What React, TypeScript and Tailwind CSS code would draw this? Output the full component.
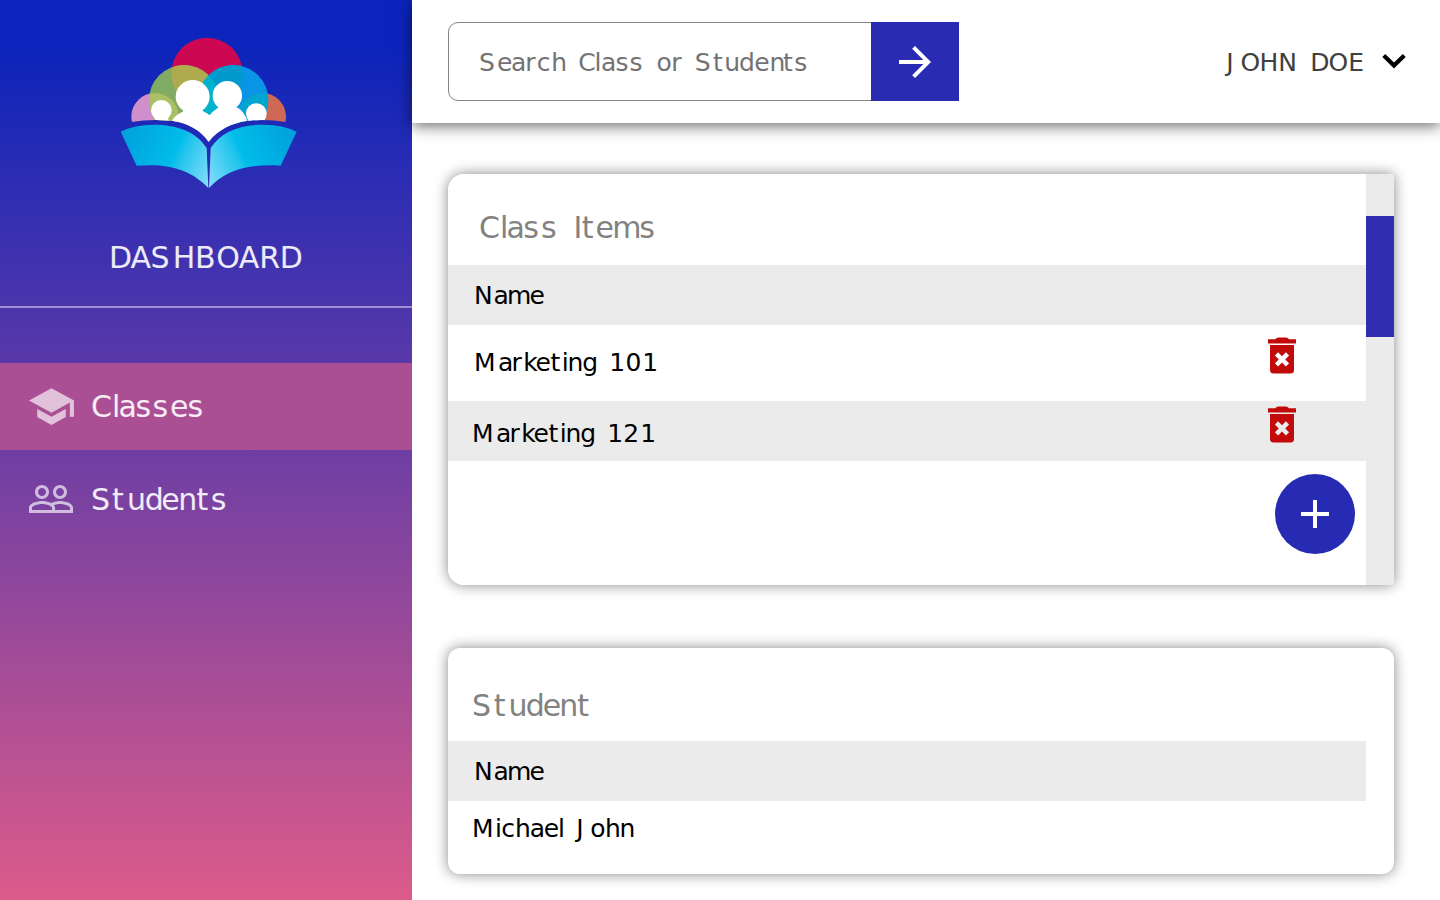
import type { ReactNode } from "react";
import { MdAdd, MdArrowForward, MdPeopleOutline, MdSchool } from "react-icons/md";

/* Text set with its own advance for every character; `stops` holds the left edge of each one. */
function Spaced({ text, stops, className = "" }: { text: string; stops: number[]; className?: string }) {
  return (
    <span className={`flex leading-none whitespace-pre ${className}`}>
      {text.split("").map((ch, i) => (
        <span
          key={i}
          className="block shrink-0"
          style={i + 1 < stops.length ? { width: stops[i + 1] - stops[i] } : undefined}
        >
          {ch}
        </span>
      ))}
    </span>
  );
}

const T = {
  dashboard: [108, 130.6, 150.6, 172.8, 195, 216.3, 238.8, 259.4, 279.8],
  classes: [91, 112, 118.6, 135.6, 152.6, 170, 187.4],
  students: [91, 112.1, 127.1, 144.7, 161.3, 178.3, 196.5, 210.7],
  search: [
    479, 497, 511, 525.2, 536.8, 551.2, 566, 578.4, 594.6, 601, 615.6, 629.6, 644, 656.5, 671.4, 680, 694.8,
    713, 724.4, 739.2, 754.3, 769.6, 783.2, 794.4,
  ],
  user: [1227, 1241.2, 1260.2, 1279, 1300, 1311, 1329.2, 1349],
  classItems: [479, 500, 506.6, 523.2, 541, 558, 573.6, 581.8, 595.6, 612.4, 639.4],
  name: [474, 493.4, 507, 529.4],
  m101: [474, 498, 511.4, 523.2, 535.4, 550.6, 561.8, 567.6, 582.4, 598, 609.2, 625.6, 642.4],
  m121: [472, 496, 509.4, 521.2, 533.4, 548.6, 559.8, 565.6, 580.4, 596, 607.4, 623.4, 640.4],
  student: [472, 493.8, 508.5, 525.7, 542.7, 559.4, 577.4],
  michael: [472, 495, 501.3, 515, 529.8, 543.8, 558, 565, 576.4, 590.4, 605, 619.6],
};

function Logo() {
  return (
    <svg className="ml-[100px] h-[180px] w-[220px] shrink-0" viewBox="0 0 660 540">
      <defs>
        <linearGradient id="pageL" x1="62" y1="350" x2="330" y2="470" gradientUnits="userSpaceOnUse">
          <stop offset="0" stopColor="#00a0dc" />
          <stop offset="0.58" stopColor="#00bdea" />
          <stop offset="0.64" stopColor="#1cc3ec" />
          <stop offset="1" stopColor="#7fdcf8" />
        </linearGradient>
        <linearGradient id="pageR" x1="590" y1="350" x2="322" y2="470" gradientUnits="userSpaceOnUse">
          <stop offset="0" stopColor="#00a0dc" />
          <stop offset="0.58" stopColor="#00bdea" />
          <stop offset="0.64" stopColor="#1cc3ec" />
          <stop offset="1" stopColor="#7fdcf8" />
        </linearGradient>
        <clipPath id="above">
          <path d="M0 0H660V306H558Q500 296 443 302C395 309 352 330 326 366C302 330 262 308 215 302Q150 296 94 306H0Z" />
        </clipPath>
        <clipPath id="green"><circle cx="252" cy="240" r="105" /></clipPath>
        <clipPath id="blue"><circle cx="400" cy="240" r="105" /></clipPath>
      </defs>
      <g clipPath="url(#above)">
        <circle cx="321" cy="160" r="107" fill="#cc0852" />
        <circle cx="165" cy="290" r="71" fill="#cf8fcb" />
        <circle cx="487" cy="290" r="71" fill="#cf6854" />
        <circle cx="252" cy="240" r="105" fill="#81aa62" />
        <circle cx="400" cy="240" r="105" fill="#0a94e6" />
        <g clipPath="url(#green)">
          <circle cx="321" cy="160" r="107" fill="#aeaa4e" />
          <circle cx="165" cy="290" r="71" fill="#a9c064" />
        </g>
        <g clipPath="url(#blue)">
          <circle cx="321" cy="160" r="107" fill="#0299cd" />
          <circle cx="487" cy="290" r="71" fill="#00a6cf" />
          <circle cx="252" cy="240" r="105" fill="#00b2cd" />
        </g>
        <g fill="#fff">
          <circle cx="184" cy="271" r="31" />
          <circle cx="469" cy="281" r="31" />
          <path d="M160 310Q163 296 172 294H200Q207 296 209 310ZM436 310Q444 300 450 297H490Q497 300 500 310Z" />
          <ellipse cx="278" cy="230" rx="51" ry="50" />
          <circle cx="382" cy="227" r="44" />
          <path d="M213 306Q227 283 248 275Q253 270 247 262H308Q302 271 312 275Q322 279 329 286Q337 274 350 266Q360 262 356 252H408Q404 261 414 264Q434 275 443 306L326 372Z" />
        </g>
      </g>
      <path fill="url(#pageL)" d="M62 335Q103 314 160 314C235 314 290 337 320 384L325 504C276 452 212 429 110 437Z" />
      <path fill="url(#pageR)" d="M590 335Q549 314 492 314C417 314 362 337 332 384L327 504C376 452 440 431 542 437Z" />
    </svg>
  );
}

function TrashIcon({ className = "" }: { className?: string }) {
  return (
    <svg className={`h-[37px] w-7 ${className}`} viewBox="0 0 28 37" fill="#c20a0a">
      <path d="M0 2.2H7.2Q8.6 .4 10.3 .4H18Q19.8 .4 21 2.2H28V6.4H0Z" />
      <path
        fillRule="evenodd"
        d="M2 8.1H26V33Q26 36.6 22.4 36.6H5.6Q2 36.6 2 33ZM10.1 15.3L6.9 18.5L10.8 22.4L6.9 26.3L10.1 29.5L14 25.6L17.9 29.5L21.1 26.3L17.2 22.4L21.1 18.5L17.9 15.3L14 19.2Z"
      />
    </svg>
  );
}

function NavItem({ icon, children, active = false }: { icon: ReactNode; children: ReactNode; active?: boolean }) {
  return (
    <a className={`flex h-[87px] shrink-0 items-start pl-[27px] text-[30px] text-white/90 ${active ? "bg-[#ab4f94]" : ""}`}>
      {icon}
      {children}
    </a>
  );
}

export default function App() {
  return (
    <div className="flex h-[900px] w-[1440px] overflow-hidden bg-white font-['DejaVu_Sans',sans-serif]">
      <aside className="flex w-[412px] shrink-0 flex-col bg-linear-to-b/srgb from-[#0b24bb] from-5% to-[#dc5b8a] pt-5">
        <Logo />
        <div className="flex h-[108px] shrink-0 border-b-2 border-white/45 pt-[43px] pl-[108px] text-[30px] text-white/90">
          <Spaced text="DASHBOARD" stops={T.dashboard} className="[&>span:first-child]:pl-px" />
        </div>
        <nav className="flex flex-col pt-[55px]">
          <NavItem active icon={<MdSchool className="mt-[19px] size-[49px] text-white/65" />}>
            <Spaced text="Classes" stops={T.classes} className="mt-[29px] ml-[15px]" />
          </NavItem>
          <NavItem icon={<MdPeopleOutline className="mt-[25px] size-12 text-white/65" />}>
            <Spaced text="Students" stops={T.students} className="mt-[35px] ml-[16px]" />
          </NavItem>
        </nav>
      </aside>

      <div className="flex w-[1028px] flex-col">
        <header className="z-10 flex h-[123px] shrink-0 items-start justify-between bg-white pt-[22px] pr-[22px] pl-9 shadow-[0_3px_14px_rgba(0,0,0,0.58)]">
          <div className="flex h-[79px] w-[511px] rounded-[10px] border border-[#858585]">
            <div className="w-[422px] pt-[27px] pl-[30px] text-[25px] text-[#737373]">
              <Spaced text="Search Class or Students" stops={T.search} />
            </div>
            <button className="-mt-px -mr-px flex h-[79px] w-[88px] shrink-0 items-center justify-center bg-[#292cb3] text-white">
              <MdArrowForward className="size-12" />
            </button>
          </div>
          <div className="flex items-start text-[25px] text-[#404040]">
            <Spaced text="JOHN DOE" stops={T.user} className="mt-7" />
            <svg className="mt-[31px] mr-[12px] ml-[18px] h-4 w-6" viewBox="0 0 24 16" fill="#000">
              <path d="M3.2 1L12 9.5L20.8 1L23.7 4L12 15.4L.3 4Z" />
            </svg>
          </div>
        </header>

        <main className="flex flex-col gap-[63px] pt-[51px] pl-9 text-[25px] text-black">
          <section className="flex h-[411px] w-[946px] overflow-hidden rounded-l-[16px] rounded-r-[4px] shadow-[0_0_14px_rgba(0,0,0,0.48)]">
            <div className="flex w-[918px] flex-col bg-white">
              <h2 className="h-[91px] pt-[39px] pl-[31px] text-[30px] text-[#828282]">
                <Spaced text="Class Items" stops={T.classItems} />
              </h2>
              <div className="h-[60px] bg-[#ebebeb] pt-[18px] pl-[26px]">
                <Spaced text="Name" stops={T.name} />
              </div>
              <div className="flex h-[76px] items-start justify-between pr-[70px] pl-[26px]">
                <Spaced text="Marketing 101" stops={T.m101} className="mt-[25px]" />
                <TrashIcon className="mt-3" />
              </div>
              <div className="flex h-[60px] items-start justify-between bg-[#ebebeb] pr-[70px] pl-[24px]">
                <Spaced text="Marketing 121" stops={T.m121} className="mt-5" />
                <TrashIcon className="mt-[5px]" />
              </div>
              <div className="flex justify-end pt-[13px] pr-[11px]">
                <button className="flex size-20 items-center justify-center rounded-full bg-[#272bb3] text-white">
                  <MdAdd className="size-12" />
                </button>
              </div>
            </div>
            <div className="w-7 bg-[#ebebeb] pt-[42px]">
              <div className="h-[121px] bg-[#332eb1]" />
            </div>
          </section>

          <section className="h-[226px] w-[946px] overflow-hidden rounded-xl bg-white shadow-[0_0_14px_rgba(0,0,0,0.48)]">
            <h2 className="h-[93px] pt-[43px] pl-6 text-[30px] text-[#828282]">
              <Spaced text="Student" stops={T.student} />
            </h2>
            <div className="h-[60px] w-[918px] bg-[#ebebeb] pt-[18px] pl-[26px]">
              <Spaced text="Name" stops={T.name} />
            </div>
            <div className="pt-[15px] pl-[24px]">
              <Spaced text="Michael John" stops={T.michael} />
            </div>
          </section>
        </main>
      </div>
    </div>
  );
}
